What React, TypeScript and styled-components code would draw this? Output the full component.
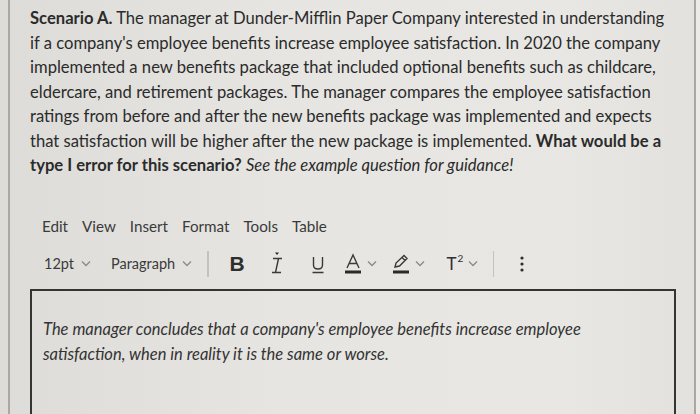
import React from 'react'
import styled, { createGlobalStyle } from 'styled-components'

const GlobalStyle = createGlobalStyle`
  html, body {
    margin: 0;
    padding: 0;
    background: #e3e2de;
    overflow: hidden;
  }
  * { box-sizing: border-box; }
`

const Page = styled.div`
  width: 700px;
  height: 414px;
  overflow: hidden;
  background: linear-gradient(90deg, #dddcd8 0%, #e6e5e1 40%, #e8e7e3 80%, #e2e1dd 100%);
  display: flex;
  font-family: Lato, 'Noto Sans', sans-serif;
  color: #2a2a2a;
`

const LeftRail = styled.div`
  width: 10px;
  flex: none;
  border-right: 2px solid #a9a8a4;
`

const Main = styled.div`
  width: 684px;
  flex: none;
  padding: 6px 0 0 20px;
  display: flex;
  flex-direction: column;
`

const RightRail = styled.div`
  flex: 1;
  border-left: 2px solid #a9a8a4;
  background: #ecebe7;
`

const Question = styled.p`
  margin: 0;
  font-size: 16.6px;
  line-height: 24.5px;
  color: #2b2b2b;
  white-space: nowrap;
  strong { font-weight: 700; }
  em { font-style: italic; }
`

const MenuBar = styled.div`
  display: flex;
  gap: 14px;
  margin: 38px 0 0 12px;
  font-size: 15.2px;
  color: #3a3a3a;
  line-height: 20px;
`

const Toolbar = styled.div`
  display: flex;
  align-items: center;
  height: 30px;
  margin: 13px 0 0 14px;
  font-size: 14.5px;
  color: #3a3a3a;
`

const Drop = styled.div<{ $w: number }>`
  display: flex;
  align-items: center;
  gap: 7px;
  width: ${({ $w }) => $w}px;
`

const Chevron = () => (
  <svg width="10" height="7" viewBox="0 0 10 7" fill="none" stroke="#8a8a88" strokeWidth="1.3">
    <path d="M1 1.5 L5 5.5 L9 1.5" />
  </svg>
)

const Sep = styled.div<{ $ml: number; $mr: number }>`
  width: 1.5px;
  height: 26px;
  background: #c3c2be;
  margin: 0 ${({ $mr }) => $mr}px 0 ${({ $ml }) => $ml}px;
`

const Btn = styled.div<{ $w: number }>`
  width: ${({ $w }) => $w}px;
  display: flex;
  align-items: center;
  gap: 5px;
  color: #2e2e2e;
  position: relative;
`

const BoldB = styled.span`
  font-family: 'Liberation Sans', Arial, sans-serif;
  font-weight: 700;
  font-size: 21px;
`

const Super = styled.span`
  font-size: 17px;
  display: flex;
  align-items: flex-start;
  sup {
    font-size: 10px;
    line-height: 1;
    margin-left: 1px;
  }
`

const Editor = styled.div`
  margin: 10px 0 0 0;
  width: 646px;
  flex: 1;
  border: 2px solid #343434;
  border-bottom: none;
  padding: 26px 0 0 11px;
`

const Answer = styled.p`
  margin: 0;
  font-style: italic;
  font-size: 16.5px;
  line-height: 25px;
  color: #333;
  white-space: nowrap;
`

export default function App() {
  return (
    <>
      <GlobalStyle />
      <Page>
        <LeftRail />
        <Main>
          <Question>
            <strong>Scenario A.</strong> The manager at Dunder-Mifflin Paper Company interested in understanding
            <br />
            if a company's employee benefits increase employee satisfaction. In 2020 the company
            <br />
            implemented a new benefits package that included optional benefits such as childcare,
            <br />
            eldercare, and retirement packages. The manager compares the employee satisfaction
            <br />
            ratings from before and after the new benefits package was implemented and expects
            <br />
            that satisfaction will be higher after the new package is implemented.{'  '}
            <strong>What would be a</strong>
            <br />
            <strong>type I error for this scenario?</strong> <em>See the example question for guidance!</em>
          </Question>
          <MenuBar>
            <span>Edit</span>
            <span>View</span>
            <span>Insert</span>
            <span>Format</span>
            <span>Tools</span>
            <span>Table</span>
          </MenuBar>
          <Toolbar>
            <Drop $w={67}>
              <span>12pt</span>
              <Chevron />
            </Drop>
            <Drop $w={88}>
              <span>Paragraph</span>
              <Chevron />
            </Drop>
            <Sep $ml={8} $mr={21} />
            <Btn $w={40}>
              <BoldB>B</BoldB>
            </Btn>
            <Btn $w={41}>
              <svg width="14" height="24" viewBox="0 0 14 24" fill="none" stroke="#3a3a3a" strokeWidth="1.4">
                <path d="M5 0.5 L9 0.5 L7 3 Z" fill="#2a2a2a" stroke="none" />
                <path d="M3 6.5 H12 M2 20.5 H11 M8.5 6.5 L5.5 20.5" />
              </svg>
            </Btn>
            <Btn $w={33}>
              <svg width="14" height="20" viewBox="0 0 14 20" fill="none" stroke="#3a3a3a" strokeWidth="1.4">
                <path d="M2.5 3 V11 Q2.5 15 7 15 Q11.5 15 11.5 11 V3 M1.5 18.5 H12.5" />
              </svg>
            </Btn>
            <Btn $w={48}>
              <svg width="18" height="22" viewBox="0 0 18 22" fill="none" stroke="#3a3a3a" strokeWidth="1.4">
                <path d="M3 15 L9 2 L15 15 M5 10.5 H13" />
                <rect x="1" y="17.5" width="16" height="3" fill="#2a2a2a" stroke="none" />
              </svg>
              <Chevron />
            </Btn>
            <Btn $w={55}>
              <svg width="18" height="22" viewBox="0 0 18 22" fill="none" stroke="#3a3a3a" strokeWidth="1.4">
                <path d="M3 14 L4 10 L12 2.5 L15 5.5 L7.5 13 Z M3 14 L7.5 13 M10 4.5 L13 7.5" />
                <rect x="1" y="17.5" width="16" height="3" fill="#2a2a2a" stroke="none" />
              </svg>
              <Chevron />
            </Btn>
            <Btn $w={46}>
              <Super>
                T<sup>2</sup>
              </Super>
              <Chevron />
            </Btn>
            <Sep $ml={0} $mr={25} />
            <Btn $w={10}>
              <svg width="6" height="22" viewBox="0 0 6 22" fill="#2e2e2e">
                <circle cx="3" cy="5" r="1.6" />
                <circle cx="3" cy="11" r="1.6" />
                <circle cx="3" cy="17" r="1.6" />
              </svg>
            </Btn>
          </Toolbar>
          <Editor>
            <Answer>
              The manager concludes that a company's employee benefits increase employee
              <br />
              satisfaction, when in reality it is the same or worse.
            </Answer>
          </Editor>
        </Main>
        <RightRail />
      </Page>
    </>
  )
}
